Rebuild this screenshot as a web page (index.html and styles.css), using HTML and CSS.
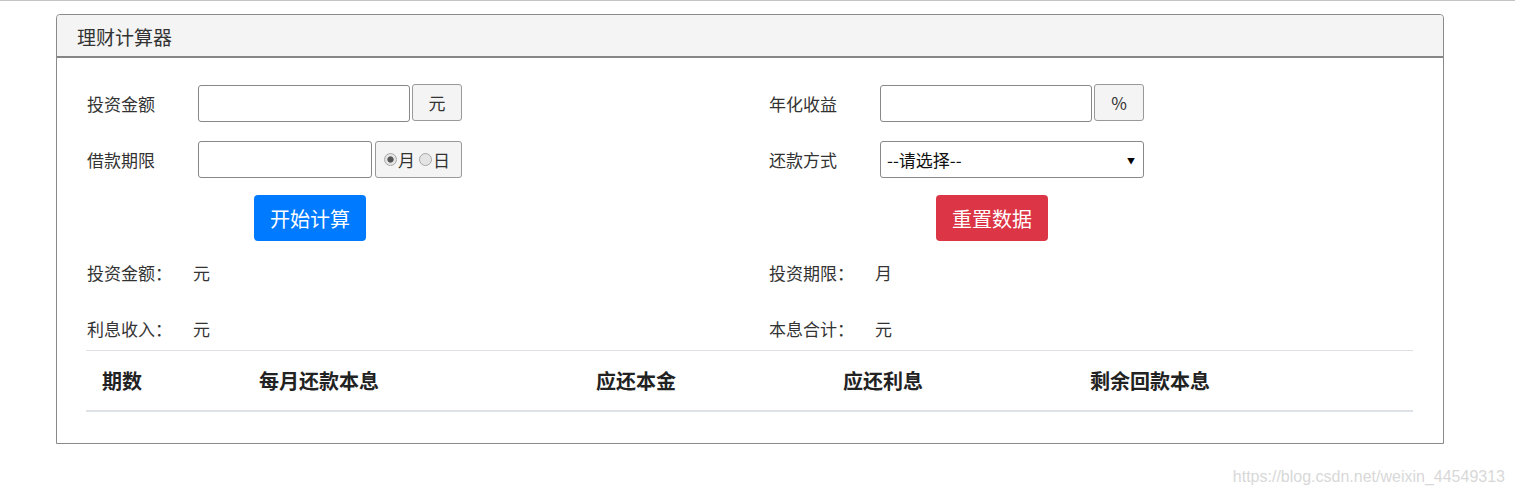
FILE: index.html
```html
<!DOCTYPE html>
<html lang="zh-CN">
<head>
  <meta charset="UTF-8" />
  <meta name="viewport" content="width=device-width, initial-scale=1.0"/>
  <title>理财计算器</title>
  <link rel="stylesheet" href="styles.css">
</head>
<body>

  <div class="topline"></div>

  <div class="panel">
    <div class="panel-head">理财计算器</div>

    <div class="panel-body">
      <div class="grid">
        <div class="form-row">
          <label>投资金额</label>
          <input type="text" class="field wide">
          <span class="addon small">元</span>
        </div>
        <div class="form-row">
          <label>年化收益</label>
          <input type="text" class="field wide">
          <span class="addon small">%</span>
        </div>

        <div class="form-row row2">
          <label>借款期限</label>
          <input type="text" class="field narrow">
          <span class="addon radios">
            <input type="radio" name="unit" checked>月
            <input type="radio" name="unit">日
          </span>
        </div>
        <div class="form-row row2">
          <label>还款方式</label>
          <div class="select">--请选择--</div>
        </div>

        <div class="btn-row">
          <button class="btn btn-blue">开始计算</button>
        </div>
        <div class="btn-row">
          <button class="btn btn-red">重置数据</button>
        </div>

        <div class="result first">
          <span class="key">投资金额：</span><span>元</span>
        </div>
        <div class="result first">
          <span class="key">投资期限：</span><span>月</span>
        </div>

        <div class="result second">
          <span class="key">利息收入：</span><span>元</span>
        </div>
        <div class="result second">
          <span class="key">本息合计：</span><span>元</span>
        </div>
      </div>

      <table class="plan">
        <thead>
          <tr>
            <th class="c1">期数</th>
            <th class="c2">每月还款本息</th>
            <th class="c3">应还本金</th>
            <th class="c4">应还利息</th>
            <th class="c5">剩余回款本息</th>
          </tr>
        </thead>
        <tbody></tbody>
      </table>
    </div>
  </div>

  <div class="watermark">https://blog.csdn.net/weixin_44549313</div>

</body>
</html>
```

FILE: styles.css
```css
body {
  margin: 0;
  font-family: "Noto Sans CJK SC", "Liberation Sans", sans-serif;
  color: #333;
  background: #fff;
}

.topline {
  height: 1px;
  background: #c4c4c4;
}

.panel {
  margin: 13px 0 0 56px;
  width: 1386px;
  border: 1px solid #8a8a8a;
  border-radius: 4px 4px 0 0;
}

.panel-head {
  height: 41px;
  line-height: 44px;
  padding-left: 20px;
  background: #f4f4f4;
  border-bottom: 2px solid #868686;
  border-radius: 4px 4px 0 0;
  font-size: 19px;
  color: #333;
}

.panel-body {
  padding: 27px 30px 31px 29px;
}

.grid {
  display: grid;
  grid-template-columns: 682px 1fr;
}

.form-row {
  display: flex;
  align-items: center;
  height: 37px;
  padding-left: 1px;
}

.form-row.row2 {
  margin-top: 19px;
}

.form-row label {
  width: 111px;
  font-size: 17px;
}

.field {
  box-sizing: border-box;
  height: 37px;
  border: 1px solid #888;
  border-radius: 3px;
  padding: 0 8px;
  font-size: 16px;
  outline: none;
}

.field.wide {
  width: 212px;
}

.field.narrow {
  width: 174px;
}

.addon {
  box-sizing: border-box;
  height: 37px;
  margin-left: 2px;
  border: 1px solid #999;
  border-radius: 3px;
  background: #f4f4f4;
  font-size: 17px;
  display: flex;
  align-items: center;
  justify-content: center;
  align-self: flex-start;
  margin-top: -1px;
}

.addon.small {
  width: 50px;
}

.addon.radios {
  width: 87px;
  margin-left: 3px;
  margin-top: 0;
  justify-content: flex-start;
  padding-left: 8px;
}

.addon.radios input {
  appearance: none;
  -webkit-appearance: none;
  width: 13px;
  height: 13px;
  margin: 0 1px 0 0;
  border: 1px solid #a8a8a8;
  border-radius: 50%;
  background: #e4e4e4;
}

.addon.radios input:not(:first-child) {
  margin-left: 4px;
}

.addon.radios input:checked {
  background: radial-gradient(circle, #555 0, #555 35%, #e4e4e4 45%);
}

.select {
  box-sizing: border-box;
  position: relative;
  width: 264px;
  height: 37px;
  line-height: 35px;
  padding-left: 6px;
  border: 1px solid #888;
  border-radius: 3px;
  font-size: 17px;
  color: #111;
}

.select::after {
  content: "▼";
  position: absolute;
  right: 8px;
  top: 1px;
  font-size: 8px;
  color: #000;
}

.btn-row {
  margin-top: 17px;
  padding-left: 168px;
}

.btn {
  width: 112px;
  height: 46px;
  border: none;
  border-radius: 4px;
  color: #fff;
  font-family: inherit;
  font-size: 20px;
  cursor: pointer;
}

.btn-blue {
  background: #007bff;
}

.btn-red {
  background: #dc3545;
}

.result {
  height: 28px;
  line-height: 28px;
  font-size: 17px;
  padding-left: 1px;
}

.result.first {
  margin-top: 18px;
}

.result.second {
  margin-top: 28px;
}

.result .key {
  display: inline-block;
  width: 106px;
}

.plan {
  width: 1327px;
  margin-top: 7px;
  border-collapse: collapse;
  table-layout: fixed;
}

.plan th {
  box-sizing: border-box;
  text-align: left;
  font-size: 20px;
  font-weight: bold;
  color: #222;
  height: 60px;
  padding: 0 0 0 16px;
  border-top: 1px solid #dee2e6;
  border-bottom: 2px solid #dee2e6;
}

.plan .c1 { width: 157px; }
.plan .c2 { width: 337px; }
.plan .c3 { width: 247px; }
.plan .c4 { width: 247px; }

.watermark {
  text-align: right;
  margin: 24px 10px 0 0;
  font-family: "Liberation Sans", sans-serif;
  font-size: 16px;
  color: #d8d8d8;
}
```
